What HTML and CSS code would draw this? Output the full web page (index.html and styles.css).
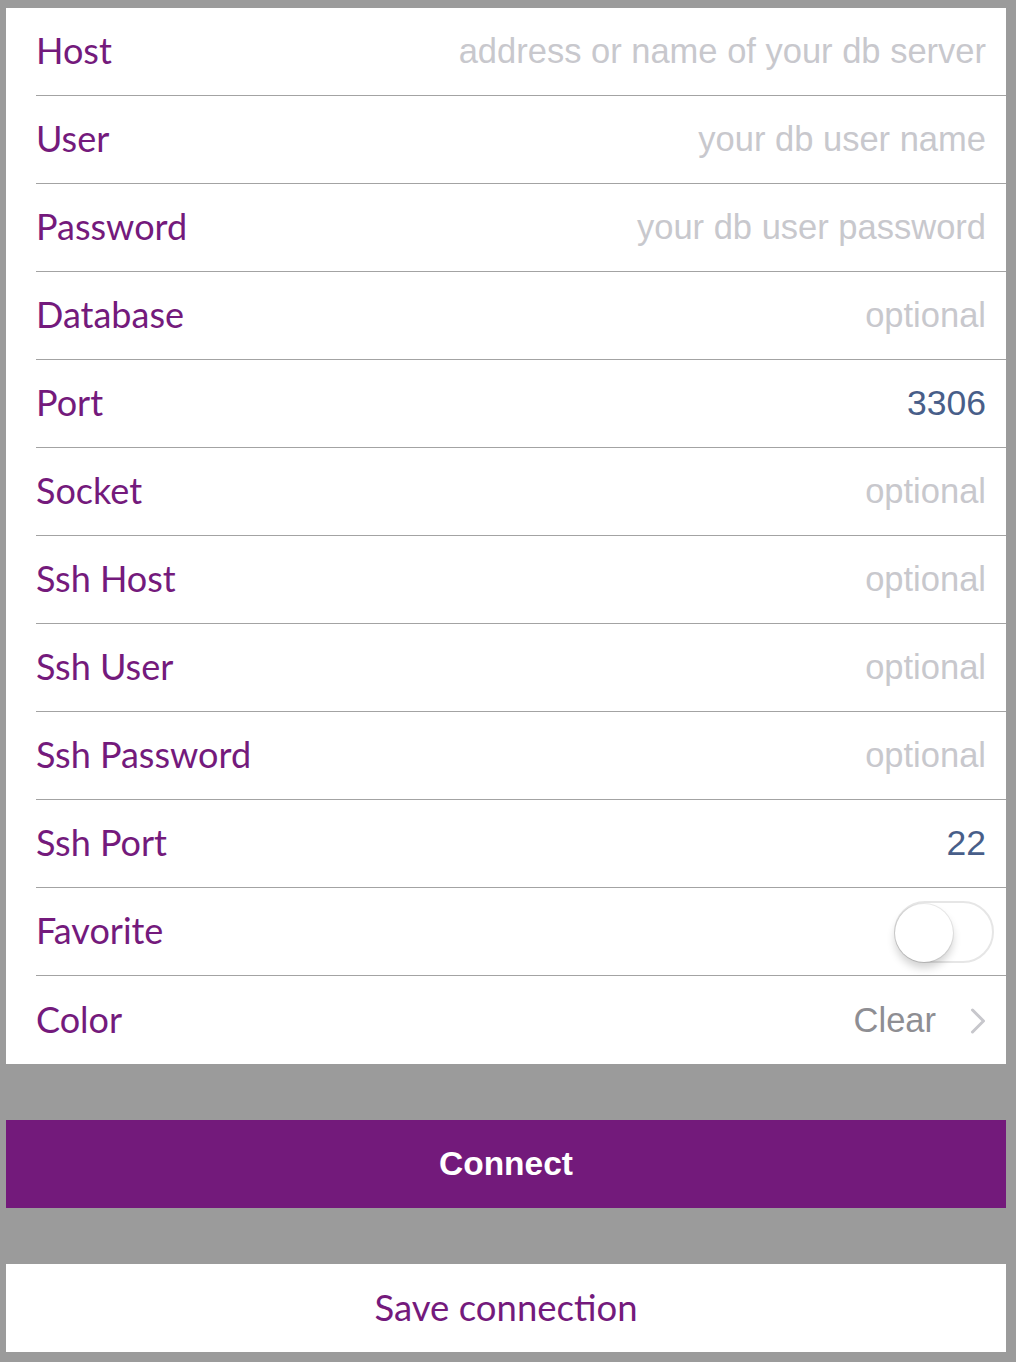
FILE: index.html
```html
<!DOCTYPE html>
<html>
<head>
<meta charset="utf-8">
<link rel="stylesheet" href="styles.css">
</head>
<body>
<div class="page">
  <div class="form">
    <div class="row"><span class="label">Host</span><span class="ph">address or name of your db server</span></div>
    <div class="row"><span class="label">User</span><span class="ph">your db user name</span></div>
    <div class="row"><span class="label">Password</span><span class="ph">your db user password</span></div>
    <div class="row"><span class="label">Database</span><span class="ph">optional</span></div>
    <div class="row"><span class="label">Port</span><span class="val">3306</span></div>
    <div class="row"><span class="label">Socket</span><span class="ph">optional</span></div>
    <div class="row"><span class="label">Ssh Host</span><span class="ph">optional</span></div>
    <div class="row"><span class="label">Ssh User</span><span class="ph">optional</span></div>
    <div class="row"><span class="label">Ssh Password</span><span class="ph">optional</span></div>
    <div class="row"><span class="label">Ssh Port</span><span class="val">22</span></div>
    <div class="row"><span class="label">Favorite</span><span class="switch"><span class="knob"></span></span></div>
    <div class="row last"><span class="label">Color</span><span class="detail">Clear<svg class="chev" width="16" height="28" viewBox="0 0 16 28"><path d="M2.5 3 L13.5 14 L2.5 25" fill="none" stroke="#c7c7cc" stroke-width="3" stroke-linecap="round" stroke-linejoin="round"/></svg></span></div>
  </div>
  <div class="connect">Connect</div>
  <div class="save">Save connection</div>
</div>
</body>
</html>
```
FILE: styles.css
```css
html, body { margin: 0; padding: 0; }
body { background: #9b9b9b; width: 1016px; height: 1362px; overflow: hidden; }
.page { padding: 8px 10px 0 6px; display: flex; flex-direction: column; }
.form { background: #fff; }
.row { height: 88px; margin-left: 30px; padding-right: 20px; display: flex; align-items: center; justify-content: space-between; box-sizing: border-box; border-bottom: 1px solid #a3a3a3; }
.row.last { border-bottom: none; height: 88px; }
.label { font-family: Lato, "Noto Sans", sans-serif; font-size: 36px; color: #741a7c; padding-bottom: 3px; }
.ph { font-family: "Liberation Sans", Arial, sans-serif; font-size: 34.5px; color: #c8c8cd; }
.val { font-family: "Liberation Sans", Arial, sans-serif; font-size: 35.5px; color: #485e89; }
.detail { font-family: "Liberation Sans", Arial, sans-serif; font-size: 34.5px; color: #8e8e93; display: flex; align-items: center; gap: 34px; }
.chev { display: block; margin-top: 2px; }
.switch { width: 96px; height: 58px; border-radius: 31px; border: 2px solid #e6e6e6; margin-right: -8px; position: relative; background: #fff; box-sizing: content-box; }
.knob { position: absolute; left: -1px; top: 1px; width: 58px; height: 58px; border-radius: 50%; background: #fff; box-shadow: 0 6px 8px rgba(0,0,0,0.18), 0 0 0 1px rgba(0,0,0,0.08); }
.connect { margin-top: 56px; height: 88px; background: #731a7b; color: #fff; font-family: "Liberation Sans", Arial, sans-serif; font-weight: bold; font-size: 33.5px; display: flex; align-items: center; justify-content: center; }
.save { margin-top: 56px; height: 88px; background: #fff; color: #741a7c; font-family: Lato, "Noto Sans", sans-serif; font-size: 36.5px; display: flex; align-items: center; justify-content: center; padding-bottom: 3px; box-sizing: border-box; box-shadow: inset 30px -1px 0 #fff, inset 0 -1px 0 #a3a3a3; }
```
